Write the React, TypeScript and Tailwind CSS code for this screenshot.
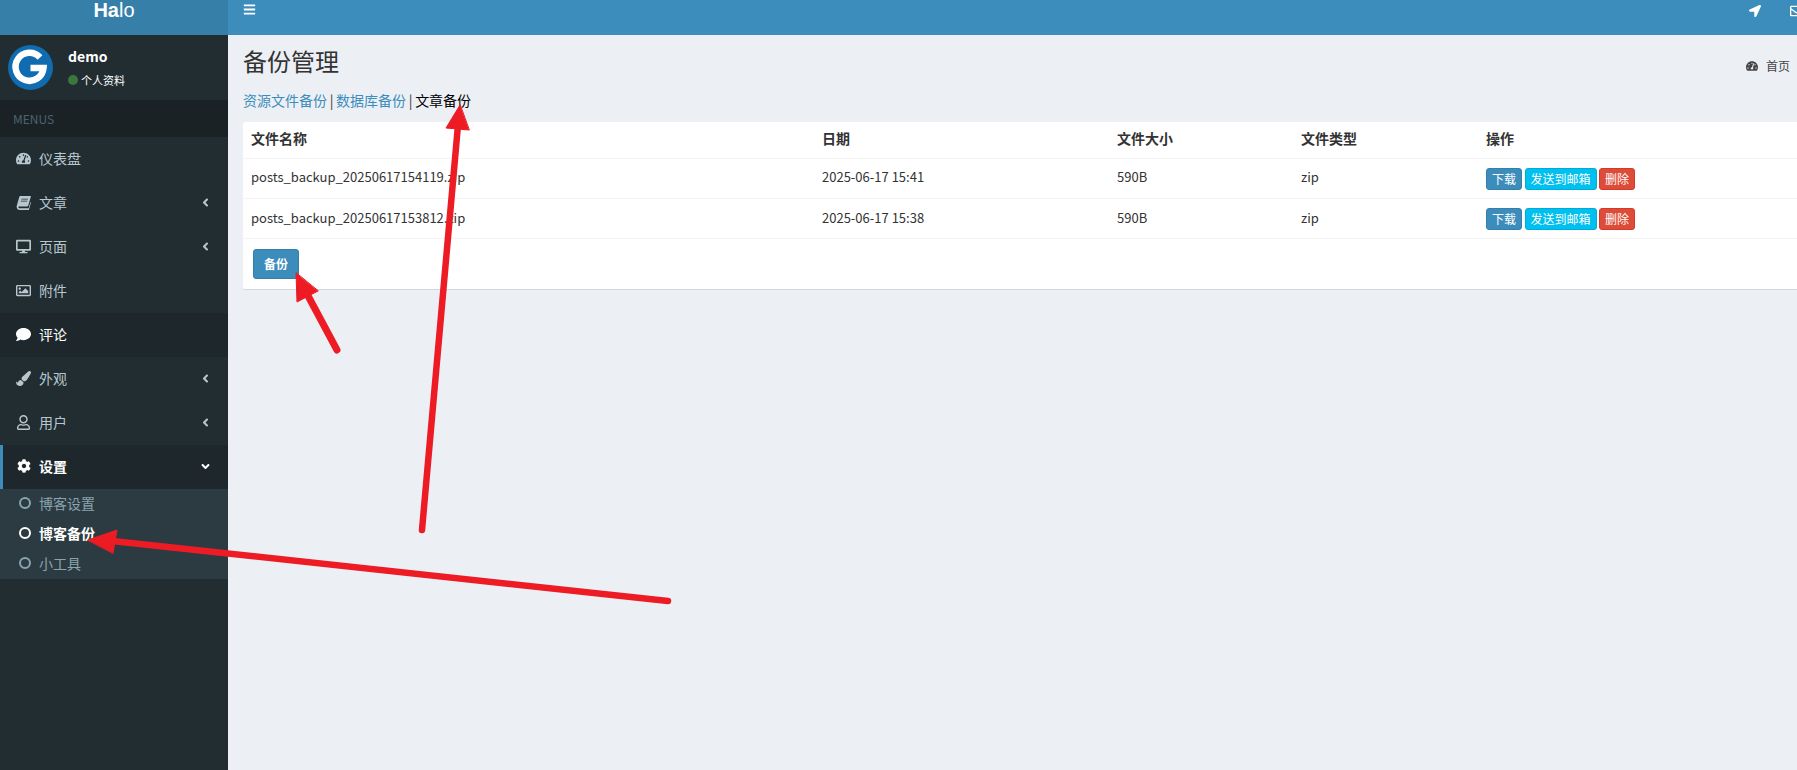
import React from 'react';
import {
  FaTachometerAlt, FaDesktop, FaRegImage, FaComment, FaPaintBrush, FaRegUser, FaCog,
  FaBars, FaLocationArrow, FaRegEnvelope, FaAngleLeft, FaAngleDown,
} from 'react-icons/fa';

const FONT = "font-['Noto_Sans_CJK_SC','Noto_Sans',sans-serif]";

/* ---------- icons ---------- */
const BookIcon = ({ className }: { className?: string }) => (
  <svg className={className} viewBox="0 0 14 14" fill="currentColor">
    <path d="M4 1h9.600c.3 0 .4.2.3.5l-2.500 8.600c-.2.5-.5.7-1 .7H3.300c-.8 0-1.100.4-1 .8.1.5.6.8 1.200.8h8.300l1.700-5.800.5.3-2 7-.3.1H3.300C1.900 13.800.800 12.800.600 11.400.500 10.800.700 10 .900 9.400L3 2.200C3.200 1.500 3.500 1 4 1z" />
    <path d="M5.200 3.500h6l-.2.7H5zM4.600 5.300h6l-.2.7h-6z" fill="#222d32" />
  </svg>
);

/* ---------- data ---------- */
const MENU = [
  { label: '仪表盘', icon: FaTachometerAlt },
  { label: '文章', icon: BookIcon, arrow: true },
  { label: '页面', icon: FaDesktop, arrow: true },
  { label: '附件', icon: FaRegImage },
  { label: '评论', icon: FaComment, hover: true },
  { label: '外观', icon: FaPaintBrush, arrow: true },
  { label: '用户', icon: FaRegUser, arrow: true },
];

const SUBMENU = [
  { label: '博客设置' },
  { label: '博客备份', active: true },
  { label: '小工具' },
];

const FILES = [
  { name: 'posts_backup_20250617154119.zip', date: '2025-06-17 15:41' },
  { name: 'posts_backup_20250617153812.zip', date: '2025-06-17 15:38' },
];

/* ---------- sub-components ---------- */
const Sidebar = () => (
  <aside className="w-[228px] shrink-0 bg-[#222d32] flex flex-col">
    <div className="h-[35px] bg-[#367fa9] text-white text-center text-[20px] leading-[20px] font-['Liberation_Sans',sans-serif]">
      <b>Ha</b>lo
    </div>
    <div className="h-[65px] flex items-center pl-2">
      <svg width="45" height="45" viewBox="0 0 45 45">
        <circle cx="22.500" cy="22.500" r="22.500" fill="#0f6cb0" />
        <path d="M32 12.500a14 14 0 1 0 3.500 10.500H22.500" fill="none" stroke="#fff" strokeWidth="6.500" />
      </svg>
      <div className="ml-[15px]">
        <div className="text-white text-[14px] leading-[16px] font-bold">demo</div>
        <div className="flex items-center text-white text-[11px] leading-[14px] mt-[9px]">
          <span className="w-[10px] h-[10px] rounded-full bg-[#3c763d] mr-[3px]" />
          个人资料
        </div>
      </div>
    </div>
    <div className="h-[37px] bg-[#1a2226] text-[#4b646f] text-[12px] leading-[37px] pl-[13px]">MENUS</div>
    {MENU.map((m) => (
      <div
        key={m.label}
        className={`h-[44px] flex items-center pl-4 pr-[16px] pb-[2px] text-[14px] ${m.hover ? 'bg-[#1e282c] text-white' : 'text-[#b8c7ce]'}`}
      >
        <span className="w-[15px] flex justify-center">
          <m.icon className="w-[15px] h-[15px]" />
        </span>
        <span className="ml-[8px] flex-1">{m.label}</span>
        {m.arrow && <FaAngleLeft className="w-[13px] h-[13px]" />}
      </div>
    ))}
    <div className="h-[44px] flex items-center pl-[13px] pr-[16px] pb-[2px] text-[14px] bg-[#1e282c] text-white border-l-[3px] border-[#3c8dbc]">
      <span className="w-[15px] flex justify-center">
        <FaCog className="w-[14px] h-[14px]" />
      </span>
      <span className="ml-[8px] flex-1 font-bold">设置</span>
      <FaAngleDown className="w-[13px] h-[13px]" />
    </div>
    <div className="bg-[#2c3b41] h-[90px]">
      {SUBMENU.map((s) => (
        <div
          key={s.label}
          className={`h-[30px] flex items-center pl-[19px] pb-[2px] text-[14px] ${s.active ? 'text-white font-bold' : 'text-[#8aa4af]'}`}
        >
          <span className="w-[12px] h-[12px] rounded-full border-2 border-current" />
          <span className="ml-[8px]">{s.label}</span>
        </div>
      ))}
    </div>
  </aside>
);

const SmallBtn = ({ color, children }: { color: string; children: React.ReactNode }) => (
  <span className={`inline-block h-[22px] px-[5px] rounded-[3px] border text-white text-[12px] leading-[20px] ${color}`}>
    {children}
  </span>
);

const Row = ({ name, date }: { name: string; date: string }) => (
  <tr className="border-t border-[#f4f4f4] h-[40px]">
    <td className="pl-2 pb-[2px]">{name}</td>
    <td className="pl-2 pb-[2px]">{date}</td>
    <td className="pl-2 pb-[2px]">590B</td>
    <td className="pl-2 pb-[2px]">zip</td>
    <td className="pl-2 pt-[1px]">
      <div className="flex gap-[2.500px]">
        <SmallBtn color="bg-[#3c8dbc] border-[#367fa9]">下载</SmallBtn>
        <SmallBtn color="bg-[#00c0ef] border-[#00acd6]">发送到邮箱</SmallBtn>
        <SmallBtn color="bg-[#dd4b39] border-[#d73925]">删除</SmallBtn>
      </div>
    </td>
  </tr>
);

/* red annotation arrows drawn over the screenshot */
const Arrows = () => (
  <svg className="absolute left-0 top-0 pointer-events-none" width="1797" height="770">
    <g fill="#ed1c24" stroke="#ed1c24" strokeLinecap="round">
      <line x1="668" y1="601" x2="112" y2="541" strokeWidth="6.500" />
      <polygon points="88,540 117,530 113,553" strokeWidth="1" />
      <line x1="422" y1="530" x2="458" y2="125" strokeWidth="6.500" />
      <polygon points="460,105 446,128 469,130" strokeWidth="1" />
      <line x1="337" y1="350" x2="306" y2="292" strokeWidth="7" />
      <polygon points="296,273 297,302 318,291" strokeWidth="1" />
    </g>
  </svg>
);

/* ========== PAGE ========== */
export default function App() {
  return (
    <div className={`relative w-[1797px] h-[770px] overflow-hidden flex bg-[#ecf0f5] text-[#333] ${FONT}`}>
      <Sidebar />
      <main className="flex-1 min-w-0 flex flex-col">
        <header className="h-[35px] shrink-0 bg-[#3c8dbc] text-white flex items-start">
          <FaBars className="w-[13px] h-[13px] ml-[15px] mt-[3px]" />
          <FaLocationArrow className="w-[12px] h-[12px] ml-auto mr-[29px] mt-[5px]" />
          <FaRegEnvelope className="w-[14px] h-[14px] mr-[-7px] mt-[4px]" />
        </header>
        <div className="h-[39px] flex justify-between items-start pl-[15px] pr-[7px]">
          <h1 className="text-[24px] leading-[26px] mt-[13px]">备份管理</h1>
          <div className="flex items-center text-[12px] text-[#444] mt-[22px]">
            <FaTachometerAlt className="w-[12px] h-[12px] mr-2" />
            首页
          </div>
        </div>
        <div className="pl-[15px] mt-[16px] text-[14px] leading-[20px] h-[32px] [word-spacing:-0.5px]">
          <span className="text-[#3c8dbc]">资源文件备份</span> | <span className="text-[#3c8dbc]">数据库备份</span> | <span className="text-black">文章备份</span>
        </div>
        <section className="ml-[15px] bg-white rounded-l-[3px] border-b border-[#d2d6de] h-[168px]">
          <table className="w-full table-fixed text-[13px] border-collapse">
            <colgroup>
              <col className="w-[571px]" />
              <col className="w-[295px]" />
              <col className="w-[184px]" />
              <col className="w-[185px]" />
              <col />
            </colgroup>
            <thead>
              <tr className="h-[36px] text-left text-[14px]">
                <th className="pl-2 pb-[3px] font-bold">文件名称</th>
                <th className="pl-2 pb-[3px] font-bold">日期</th>
                <th className="pl-2 pb-[3px] font-bold">文件大小</th>
                <th className="pl-2 pb-[3px] font-bold">文件类型</th>
                <th className="pl-2 pb-[3px] font-bold">操作</th>
              </tr>
            </thead>
            <tbody>
              {FILES.map((f) => (
                <Row key={f.name} name={f.name} date={f.date} />
              ))}
            </tbody>
          </table>
          <div className="border-t border-[#f4f4f4] pt-[10px] pl-[10px]">
            <button className="w-[46px] h-[30px] rounded-[3px] bg-[#3c8dbc] border border-[#367fa9] text-white text-[12px] font-bold">
              备份
            </button>
          </div>
        </section>
      </main>
      <Arrows />
    </div>
  );
}
